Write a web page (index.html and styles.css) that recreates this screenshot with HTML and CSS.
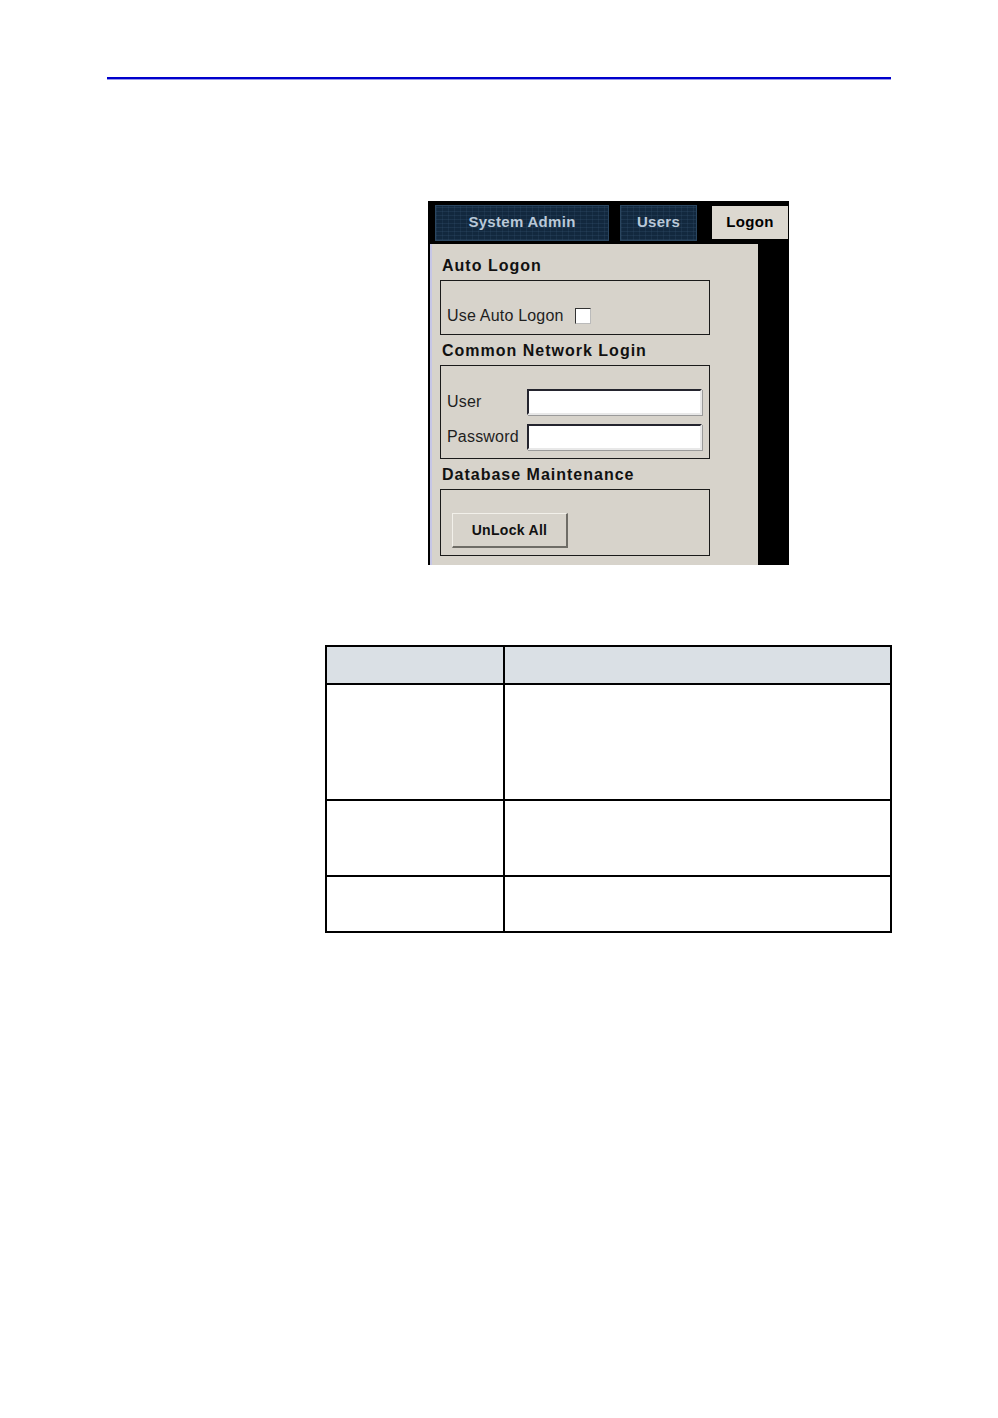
FILE: index.html
```html
<!DOCTYPE html>
<html>
<head>
<meta charset="utf-8">
<link rel="stylesheet" href="styles.css">
</head>
<body>
<div class="page">
  <div class="rule"></div>
  <div class="shot">
    <div class="tabs">
      <div class="tab tab-dark tab-sys">System Admin</div>
      <div class="tab tab-dark tab-users">Users</div>
      <div class="tab tab-active">Logon</div>
    </div>
    <div class="body-row">
      <div class="panel">
        <div class="heading">Auto Logon</div>
        <div class="group group-auto">
          <span class="label">Use Auto Logon</span>
          <span class="checkbox"></span>
        </div>
        <div class="heading">Common Network Login</div>
        <div class="group group-net">
          <div class="field"><span class="label flabel">User</span><span class="input"></span></div>
          <div class="field"><span class="label flabel">Password</span><span class="input"></span></div>
        </div>
        <div class="heading">Database Maintenance</div>
        <div class="group group-db">
          <div class="btn">UnLock All</div>
        </div>
      </div>
      <div class="side"></div>
    </div>
  </div>
  <table class="grid">
    <tr class="head"><td class="c1"></td><td class="c2"></td></tr>
    <tr class="r1"><td></td><td></td></tr>
    <tr class="r2"><td></td><td></td></tr>
    <tr class="r3"><td></td><td></td></tr>
  </table>
</div>
</body>
</html>
```

FILE: styles.css
```css
html, body {
  margin: 0;
  padding: 0;
  background: #ffffff;
}
.page {
  width: 998px;
  height: 1418px;
  display: flex;
  flex-direction: column;
  font-family: "Liberation Sans", Arial, sans-serif;
}
.rule {
  margin-top: 77px;
  margin-left: 107px;
  width: 784px;
  height: 2px;
  background: #0000cc;
  box-shadow: 0 0.5px 0 #3030d8;
}
.shot {
  margin-top: 122px;
  margin-left: 428px;
  width: 361px;
  height: 364px;
  background: #000000;
  display: flex;
  flex-direction: column;
}
.tabs {
  display: flex;
  align-items: flex-start;
  height: 43px;
  padding-top: 4px;
  box-sizing: border-box;
}
.tab {
  font-weight: bold;
  font-size: 15px;
  letter-spacing: 0.3px;
  display: flex;
  align-items: center;
  justify-content: center;
  box-sizing: border-box;
  padding-bottom: 4px;
}
.tab-dark {
  height: 36px;
  background: #12283e;
  color: #b9c8d8;
  border: 1px solid #2a4660;
  background-image: repeating-linear-gradient(0deg, rgba(60,90,120,0.25) 0 1px, transparent 1px 4px), repeating-linear-gradient(90deg, rgba(60,90,120,0.2) 0 1px, transparent 1px 6px);
}
.tab-sys {
  margin-left: 7px;
  width: 174px;
}
.tab-users {
  margin-left: 11px;
  width: 77px;
}
.tab-active {
  margin-left: 15px;
  margin-top: 1px;
  width: 76px;
  height: 33px;
  background: #dcd8d0;
  color: #000000;
  padding-bottom: 2px;
}
.body-row {
  display: flex;
  flex: 1;
}
.panel {
  margin-left: 2px;
  width: 328px;
  background: #d7d3cb;
  border-left: 2px solid #c6c6e6;
  box-sizing: border-box;
  padding: 12px 0 0 8px;
  display: flex;
  flex-direction: column;
}
.side {
  flex: 1;
  background: #000000;
}
.heading {
  font-weight: bold;
  font-size: 16px;
  letter-spacing: 1px;
  color: #111111;
  line-height: 20px;
  height: 20px;
  padding-left: 2px;
}
.group {
  width: 270px;
  border: 1.5px solid #1a1a1a;
  box-sizing: border-box;
  margin-top: 4px;
  margin-bottom: 6px;
}
.label {
  font-size: 16px;
  color: #1e1e1e;
  letter-spacing: 0.2px;
}
.group-auto {
  height: 55px;
  display: flex;
  align-items: flex-end;
  padding: 0 0 9px 6px;
}
.checkbox {
  display: inline-block;
  width: 14px;
  height: 14px;
  margin-left: 11px;
  background: #ffffff;
  border: 1px solid #333333;
  border-right-color: #bbbbbb;
  border-bottom-color: #bbbbbb;
  margin-bottom: 1px;
}
.group-net {
  height: 94px;
  padding: 23px 0 0 6px;
  display: flex;
  flex-direction: column;
  gap: 9px;
}
.field {
  display: flex;
  align-items: center;
  height: 26px;
}
.flabel {
  width: 80px;
}
.input {
  width: 175px;
  height: 26px;
  box-sizing: border-box;
  background: #ffffff;
  border: 2px solid #24242e;
  border-right-color: #e8e8e8;
  border-bottom-color: #e8e8e8;
  box-shadow: 1px 1px 0 #9a9a9a;
}
.group-db {
  height: 67px;
  padding: 23px 0 0 11px;
}
.btn {
  width: 116px;
  height: 35px;
  box-sizing: border-box;
  border: 1px solid #f2f0ea;
  border-right: 2px solid #6e6c66;
  border-bottom: 2px solid #6e6c66;
  display: flex;
  align-items: center;
  justify-content: center;
  font-weight: bold;
  font-size: 14px;
  letter-spacing: 0.3px;
  color: #111111;
}
.grid {
  margin-top: 80px;
  margin-left: 325px;
  width: 567px;
  border-collapse: collapse;
}
.grid td {
  border: 2px solid #000000;
  padding: 0;
}
.grid .c1 {
  width: 176px;
}
.grid .head td {
  height: 36px;
  background: #dae0e5;
}
.grid .r1 td { height: 114px; }
.grid .r2 td { height: 74px; }
.grid .r3 td { height: 54px; }
```
